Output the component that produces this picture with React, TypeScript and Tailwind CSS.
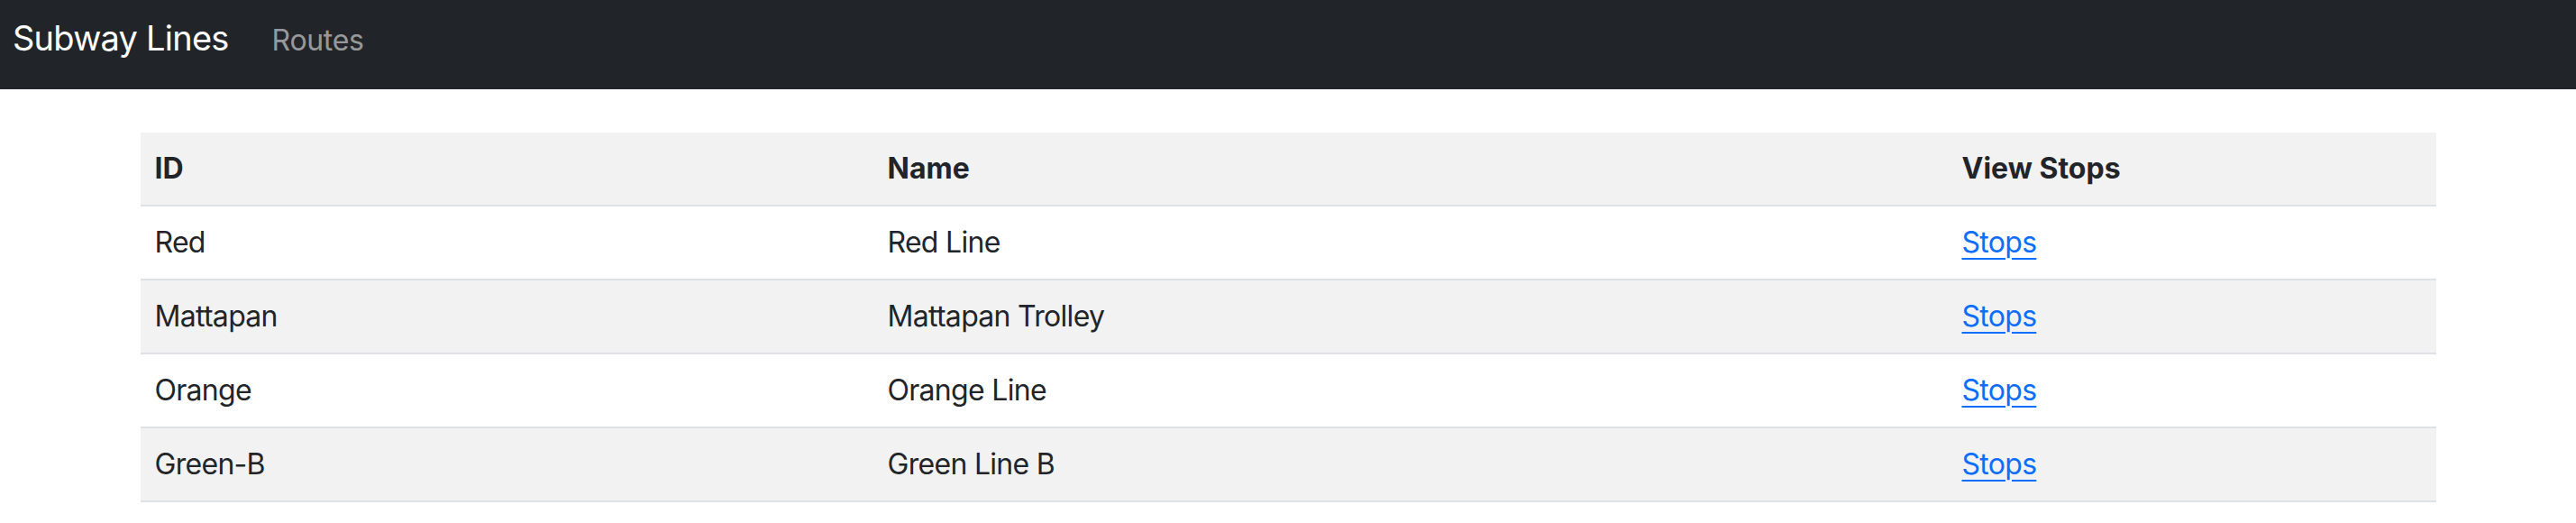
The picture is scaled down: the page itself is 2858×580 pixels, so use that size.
import React from "react";

const rows = [
  { id: "Red", name: "Red Line" },
  { id: "Mattapan", name: "Mattapan Trolley" },
  { id: "Orange", name: "Orange Line" },
  { id: "Green-B", name: "Green Line B" },
];

export default function App() {
  return (
    <div className="min-h-[580px] bg-white text-[#212529]" style={{ fontFamily: "Inter, 'Liberation Sans', sans-serif" }}>
      <nav className="flex h-[99px] items-baseline bg-[#212529] pt-[12px] pl-[14px]">
        <span className="text-[38px] leading-[60px] tracking-[-0.02em] text-white">Subway Lines</span>
        <span className="ml-[48px] text-[32px] leading-[48px] tracking-[-0.01em] text-[rgba(255,255,255,0.55)]">Routes</span>
      </nav>
      <div className="mx-auto mt-[48px] w-[2547px]">
        <table className="w-full border-collapse text-left text-[32px] leading-[48px]">
          <thead>
            <tr className="border-b-2 border-[#dee2e6] bg-[#f2f2f2]">
              <th className="w-[813px] px-[16px] py-[16px] font-bold">ID</th>
              <th className="w-[1192px] px-[16px] py-[16px] font-bold">Name</th>
              <th className="px-[16px] py-[16px] font-bold">View Stops</th>
            </tr>
          </thead>
          <tbody>
            {rows.map((r, i) => (
              <tr key={r.id} className={"border-b-2 border-[#dee2e6] " + (i % 2 === 1 ? "bg-[#f2f2f2]" : "bg-white")}>
                <td className="px-[16px] py-[16px] tracking-[-0.022em]">{r.id}</td>
                <td className="px-[16px] py-[16px] tracking-[-0.022em]">{r.name}</td>
                <td className="px-[16px] py-[16px] tracking-[-0.022em]">
                  <a href="#" className="text-[#0d6efd] underline decoration-2 underline-offset-[6px]">Stops</a>
                </td>
              </tr>
            ))}
          </tbody>
        </table>
      </div>
    </div>
  );
}
